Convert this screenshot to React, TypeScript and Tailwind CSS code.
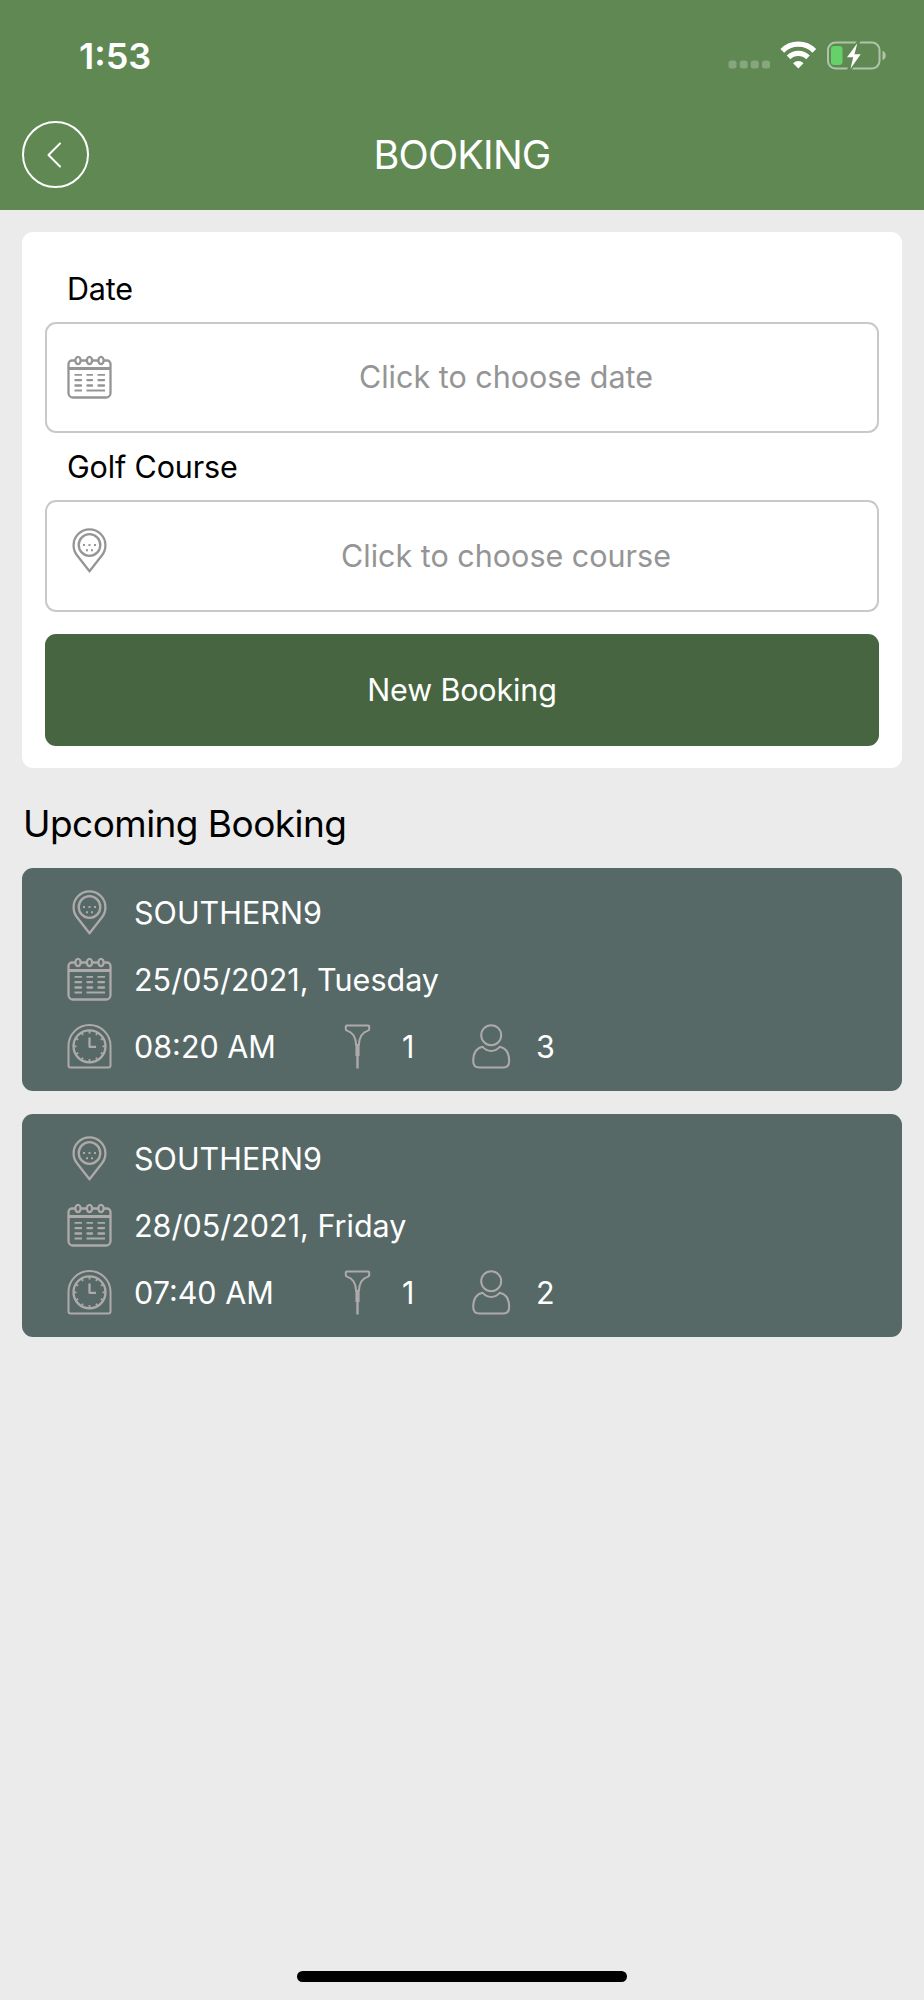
import type { ReactNode } from 'react';

const BOOKINGS = [
  { course: 'SOUTHERN9', date: '25/05/2021, Tuesday', time: '08:20 AM', tee: 1, players: 3 },
  { course: 'SOUTHERN9', date: '28/05/2021, Friday', time: '07:40 AM', tee: 1, players: 2 },
];

const Icon = ({ children }: { children: ReactNode }) => (
  <svg
    width="45"
    height="45"
    viewBox="0 0 45 45"
    fill="none"
    stroke="currentColor"
    strokeWidth="2.3"
    strokeLinejoin="round"
    className="flex-shrink-0"
  >
    {children}
  </svg>
);

const PinIcon = () => (
  <Icon>
    <path d="M22.5 43.3L10 27.3A15.8 15.8 0 0 1 6.6 17.3a15.9 15.9 0 0 1 31.8 0A15.8 15.8 0 0 1 35 27.3z" />
    <circle cx="22.5" cy="17" r="10.8" />
    <path d="M16 17h2M21.5 17h2M27 17h2M19 22.3h2M24 22.3h2" strokeWidth="2" />
  </Icon>
);

const CalendarIcon = () => (
  <Icon>
    <path d="M8.3 5.5H5A3.5 3.5 0 0 0 1.5 9v29A4.5 4.5 0 0 0 6 42.5h33a4.5 4.5 0 0 0 4.5-4.5V9A3.5 3.5 0 0 0 40 5.5h-3.3M14 5.5h5.7M25.3 5.5H31" />
    <path d="M1.5 13.5h42" strokeWidth="2.8" />
    <ellipse cx="11" cy="5.5" rx="2.6" ry="3.6" />
    <ellipse cx="22.5" cy="5.5" rx="2.6" ry="3.6" />
    <ellipse cx="34" cy="5.5" rx="2.6" ry="3.6" />
    <path d="M7.5 19.8H15M19.5 19.8H26M30.5 19.8H38M7.5 35.5H15M19.5 35.5H38" strokeWidth="1.8" />
    <path d="M8.5 25.1H14M20.5 25.1H25M31.5 25.1H37M8.5 30.5H14M20.5 30.5H25M31.5 30.5H37" strokeWidth="2.4" strokeLinecap="round" />
  </Icon>
);

const ClockIcon = () => (
  <Icon>
    <path d="M1.5 41.5V22a21 21 0 0 1 42 0v19.5a2 2 0 0 1-2 2h-38a2 2 0 0 1-2-2z" strokeWidth="2" />
    <circle cx="22.5" cy="22.3" r="16" />
    <path d="M22.5 13.5v9.3H29" />
    <path
      d="M22.5 6.5v3M22.5 35v3M6.5 22.3h3M35.5 22.3h3M14.5 8.5l1.5 2.5M30.5 8.5L29 11M8.7 14.3l2.5 1.5M36.3 14.3l-2.5 1.5M8.7 30.3l2.5-1.5M36.3 30.3l-2.5-1.5M14.5 36.1l1.5-2.5M30.5 36.1L29 33.6"
      strokeWidth="1.8"
    />
  </Icon>
);

const TeeIcon = () => (
  <Icon>
    <path
      d="M21.2 21.5C20.8 12.5 17.5 8 12 6.6A1.6 1.6 0 0 1 10.8 5V2.5a1 1 0 0 1 1-1h21.400a1 1 0 0 1 1 1V5A1.600 1.600 0 0 1 33 6.600C27.500 8 24.200 12.500 23.800 21.500"
      strokeWidth="2"
    />
    <path d="M22.5 20v12" strokeWidth="4.2" />
    <path d="M22.5 31v13.5" strokeWidth="2.4" />
  </Icon>
);

const PersonIcon = () => (
  <Icon>
    <circle cx="22.2" cy="11.2" r="10" strokeWidth="2" />
    <path
      d="M13.5 22.7c2.5 3 5.400 4.300 8.700 4.300s6.200-1.300 8.700-4.300c5.800 1.300 9.300 6 9.300 14.300 0 4-2.300 6.500-6.300 6.500H10.500c-4 0-6.300-2.500-6.300-6.500 0-8.300 3.500-13 9.300-14.300z"
      strokeWidth="2"
    />
  </Icon>
);

const StatusIcons = () => (
  <svg width="160" height="32" viewBox="0 0 160 32" fill="none">
    <g fill="white" fillOpacity="0.25">
      <rect x="0.5" y="20.5" width="8" height="8" rx="2.5" />
      <rect x="11.7" y="20.5" width="8" height="8" rx="2.5" />
      <rect x="22.8" y="20.5" width="8" height="8" rx="2.5" />
      <rect x="34" y="20.5" width="8" height="8" rx="2.5" />
    </g>
    <g stroke="white" strokeWidth="5.2">
      <path d="M54.3 10.8a22.5 22.5 0 0 1 32 0" />
      <path d="M60.6 17.3a13.8 13.8 0 0 1 19.4 0" />
    </g>
    <path d="M70.3 28.5l-5.2-5.3a7.5 7.5 0 0 1 10.4 0z" fill="white" />
    <rect x="100" y="2.6" width="51.5" height="25.8" rx="7.5" stroke="white" strokeOpacity="0.5" strokeWidth="2" />
    <path d="M154.5 10.8c2 .6 3.2 2.3 3.2 4.7s-1.2 4.1-3.2 4.7z" fill="white" fillOpacity="0.5" />
    <rect x="103" y="6" width="11.5" height="19" rx="3" fill="#67d169" />
    <path d="M129.5 0.5L116 17.5h7L118.5 32h3.5L136 13h-7.5l4-12.5z" fill="#5f8853" />
    <path d="M129.3 3.2L119 17.2h6.2l-2.7 11.6L132.7 14.2h-6.2z" fill="white" />
  </svg>
);

function Field({ label, placeholder, icon }: { label: string; placeholder: string; icon: ReactNode }) {
  return (
    <div>
      <p className="pl-[22px] h-[67px] leading-[67px] tracking-[-0.005em] text-black">{label}</p>
      <div className="h-[111.5px] flex items-center pl-5 border-2 border-[#c9c9c9] rounded-[11px] text-[#959595]">
        {icon}
        <span className="ml-[23px] flex-1 text-center">{placeholder}</span>
      </div>
    </div>
  );
}

function BookingCard({ booking }: { booking: (typeof BOOKINGS)[number] }) {
  return (
    <div className="h-[223px] rounded-[11px] bg-[#566966] py-[11px] pl-[45px] text-[#aeaaaa]">
      <div className="flex items-center h-[67px] gap-[22px]">
        <PinIcon />
        <span className="text-white">{booking.course}</span>
      </div>
      <div className="flex items-center h-[67px] gap-[22px]">
        <CalendarIcon />
        <span className="text-white">{booking.date}</span>
      </div>
      <div className="flex items-center h-[67px]">
        <ClockIcon />
        <span className="ml-[22px] w-[201px] text-white">{booking.time}</span>
        <TeeIcon />
        <span className="ml-[22px] w-[67px] text-white">{booking.tee}</span>
        <PersonIcon />
        <span className="ml-[22px] text-white">{booking.players}</span>
      </div>
    </div>
  );
}

export default function App() {
  return (
    <div className="w-[924px] h-[2000px] flex flex-col bg-[#ebebeb] font-['Inter',sans-serif] text-[30.5px] overflow-hidden">
      <header className="h-[210px] flex-shrink-0 bg-[#5f8853] text-white">
        <div className="h-[111px] flex items-center justify-between pl-[79px] pr-[36px]">
          <span className="text-[36px] font-semibold">1:53</span>
          <StatusIcons />
        </div>
        <div className="h-[87px] flex items-center px-[22px]">
          <button className="w-[67px] h-[67px] rounded-full border-2 border-white flex items-center justify-center">
            <svg width="16" height="26" viewBox="0 0 16 26" fill="none" className="-ml-[2px]">
              <path d="M13 1.5L1.5 13 13 24.5" stroke="white" strokeWidth="2" strokeLinecap="round" strokeLinejoin="round" />
            </svg>
          </button>
          <h1 className="flex-1 pt-[2px] text-center text-[39.5px] font-normal tracking-[-0.02em]">BOOKING</h1>
          <div className="w-[67px]" />
        </div>
      </header>

      <main className="flex-1 px-[22px] pt-[22px]">
        <section className="h-[536px] rounded-[11px] bg-white px-[23px] pt-[22.5px]">
          <Field label="Date" placeholder="Click to choose date" icon={<CalendarIcon />} />
          <Field
            label="Golf Course"
            placeholder="Click to choose course"
            icon={<div className="-mt-[10px]"><PinIcon /></div>}
          />
          <button className="mt-[22px] w-full h-[112px] rounded-[11px] bg-[#476540] text-white tracking-[-0.005em]">
            New Booking
          </button>
        </section>

        <h2 className="h-[100px] pt-[30px] pl-px text-[37px] leading-[52px] tracking-[-0.015em] text-black">
          Upcoming Booking
        </h2>

        <div className="flex flex-col gap-[23px]">
          {BOOKINGS.map((booking) => (
            <BookingCard key={booking.date} booking={booking} />
          ))}
        </div>
      </main>

      <div className="mx-auto mb-[18px] w-[330px] h-[11px] rounded-full bg-black" />
    </div>
  );
}
